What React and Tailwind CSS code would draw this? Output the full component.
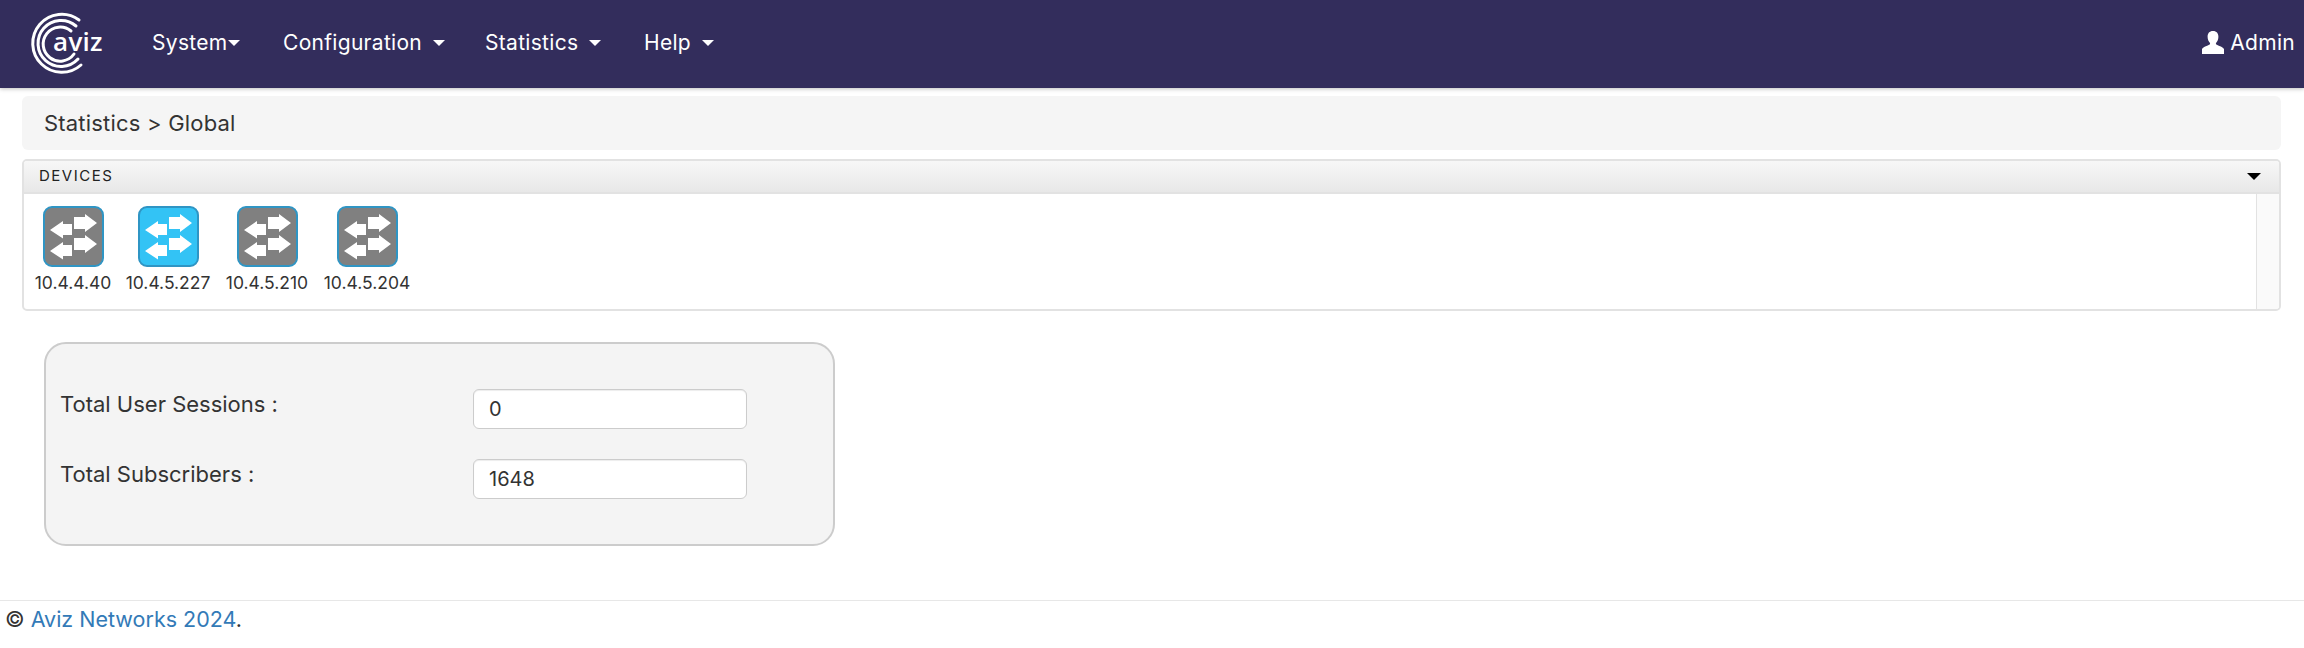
const navItems = [
  { label: "System", gap: "ml-[1px]", width: "w-[131px]" },
  { label: "Configuration", gap: "ml-[11px]", width: "w-[202px]" },
  { label: "Statistics", gap: "ml-[11px]", width: "w-[159px]" },
  { label: "Help", gap: "ml-[11px]", width: "w-[100px]" },
];

const devices = [
  { ip: "10.4.4.40", active: false, width: "w-[96px]" },
  { ip: "10.4.5.227", active: true, width: "w-[94px]" },
  { ip: "10.4.5.210", active: false, width: "w-[104px]" },
  { ip: "10.4.5.204", active: false, width: "w-[96px]" },
];

function Caret({ className }) {
  return <span className={`inline-block h-0 w-0 border-x-[6px] border-t-[6px] border-x-transparent border-t-white ${className}`} />;
}

function AvizLogo() {
  return (
    <svg width="80" height="64" viewBox="0 0 80 64" className="shrink-0">
      <g fill="none" stroke="#fff" strokeWidth="3" strokeLinecap="round">
        <path d="M50 9 A29 29 0 1 0 52 54" />
        <path d="M47 15 A23 23 0 1 0 49 48" />
        <path d="M42 20 A17 17 0 1 0 45 43" />
      </g>
      <text x="24" y="40" fill="#fff" fontSize="26" fontFamily="Open Sans, sans-serif" fontWeight="600">aviz</text>
    </svg>
  );
}

function UserIcon() {
  return (
    <svg width="22" height="24" viewBox="0 0 22 24">
      <path fill="#fff" d="M11 0c3.600 0 5.400 2.400 5.400 5.800 0 2.400-.9 4.600-2.200 6-.4.500-.4 1.300.2 1.800.8.700 6.600 2.500 7.600 4.400V23H0v-5c1-1.900 6.800-3.700 7.600-4.400.6-.5.6-1.300.2-1.800-1.300-1.400-2.200-3.600-2.200-6C5.600 2.400 7.400 0 11 0z" />
    </svg>
  );
}

function SwitchIcon({ active }) {
  return (
    <div className={`flex h-[61px] w-[61px] items-center justify-center rounded-[9px] border-2 border-[#2f95c4] ${active ? "bg-[#33c3f5]" : "bg-[#808080]"}`}>
      <svg width="60" height="60" viewBox="0 0 60 60" className="shrink-0">
        <g fill="#fff">
          <path d="M31 10h11V7l12 9-12 9v-3H31z" />
          <path d="M29 17H20v-3L7 23l13 8.500V28h9z" />
          <path d="M31 31h11v-3l12 9-12 9v-3H31z" />
          <path d="M29 38H20v-3L7 44l13 8.500V49h9z" />
        </g>
      </svg>
    </div>
  );
}

function StatRow({ label, value, rowClass }) {
  return (
    <div className={`flex ${rowClass}`}>
      <label className="w-[413px] leading-[30px]">{label}</label>
      <input
        readOnly
        value={value}
        className="h-[40px] w-[274px] rounded-[6px] border border-[#ccc] bg-white px-[15px] text-[20px] text-[#333] shadow-[inset_0_1px_1px_rgba(0,0,0,0.075)] outline-none"
      />
    </div>
  );
}

export default function App() {
  return (
    <div className="flex h-[648px] flex-col overflow-hidden bg-white font-['Inter',sans-serif] text-[20px] text-[#333]">
      <nav className="flex h-[88px] shrink-0 items-center justify-between bg-[#332d5c] pb-[2px] pl-[29px] pr-[9px] text-[21px] tracking-[0.3px] text-white shadow-[0_1px_4px_rgba(0,0,0,0.25)]">
        <div className="flex items-center">
          <AvizLogo />
          <ul className="ml-[43px] flex items-center">
            {navItems.map((item) => (
              <li key={item.label} className={`flex items-center ${item.width}`}>
                <span>{item.label}</span>
                <Caret className={item.gap} />
              </li>
            ))}
          </ul>
        </div>
        <div className="flex items-center gap-[6px]">
          <UserIcon />
          <span>Admin</span>
        </div>
      </nav>

      <div className="ml-[22px] mr-[23px] mt-[8px] flex h-[54px] shrink-0 items-center rounded-[6px] bg-[#f5f5f5] px-[22px] text-[22px] tracking-[0.2px]">
        Statistics &gt; Global
      </div>

      <section className="ml-[22px] mr-[23px] mt-[9px] h-[152px] shrink-0 overflow-hidden rounded-[5px] border-2 border-[#e2e2e2]">
        <header className="flex h-[33px] items-center justify-between border-b-2 border-[#e2e2e2] bg-gradient-to-b from-[#f7f7f7] to-[#e8e8e8] pl-[15px] pr-[18px]">
          <span className="text-[15px] tracking-[1.5px] text-[#222]">DEVICES</span>
          <span className="h-0 w-0 border-x-[7px] border-t-[7px] border-x-transparent border-t-black" />
        </header>
        <div className="flex h-[115px]">
          <div className="flex min-w-0 flex-1 pl-[1px] pt-[12px]">
            {devices.map((device) => (
              <div key={device.ip} className={`flex flex-col items-center ${device.width}`}>
                <SwitchIcon active={device.active} />
                <span className="mt-[4px] whitespace-nowrap text-[17.5px] leading-[24px]">{device.ip}</span>
              </div>
            ))}
          </div>
          <div className="w-[23px] shrink-0 border-l border-[#e2e2e2] bg-[#fafafa]" />
        </div>
      </section>

      <div className="ml-[44px] mt-[31px] h-[204px] w-[791px] shrink-0 rounded-[22px] border-2 border-[#ccc] bg-[#f4f4f4] pl-[14px] pt-[45px] text-[22px]">
        <StatRow label="Total User Sessions :" value="0" />
        <StatRow label="Total Subscribers :" value="1648" rowClass="mt-[30px]" />
      </div>

      <footer className="mt-[54px] border-t border-[#e7e7e7] pl-[5px] pt-[2px] text-[21.5px]">
        © <a href="#" className="text-[#337ab7]">Aviz Networks 2024</a>.
      </footer>
    </div>
  );
}
